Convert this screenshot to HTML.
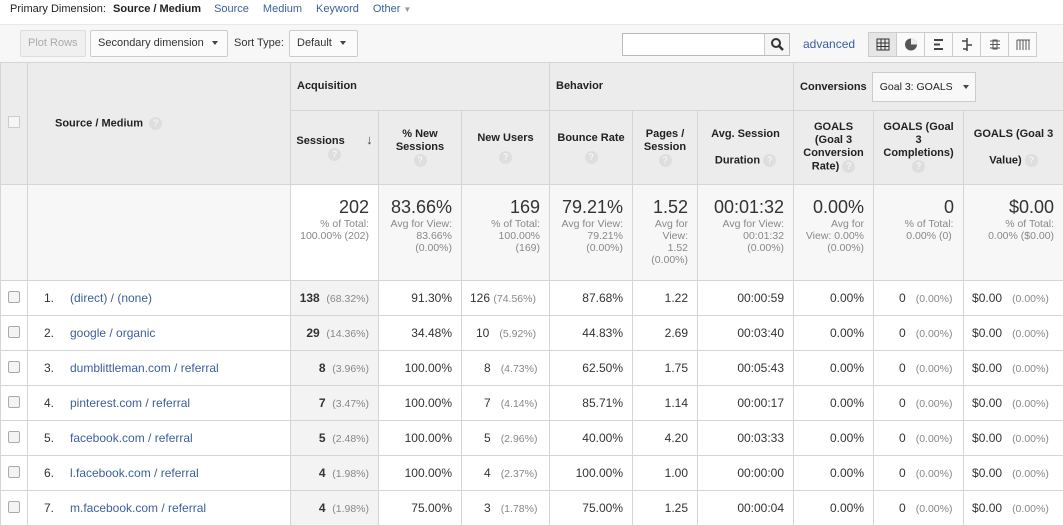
<!DOCTYPE html>
<html><head><style>
*{box-sizing:border-box;margin:0;padding:0}
body{width:1063px;height:525px;overflow:hidden;background:#fff;font-family:"Liberation Sans",Arial,sans-serif;color:#333;position:relative}
.top{position:absolute;left:0;top:0;width:1063px;height:25px;font-size:11px;padding:3px 0 0 10px;color:#222}
.top b{margin-left:4px;margin-right:13px}
.top a{color:#3b5f9b;margin-right:14px;text-decoration:none}
.tb{position:absolute;left:0;top:24px;width:1063px;height:38px;background:#f7f7f7;border-top:1px solid #e8e8e8}
.btn{position:absolute;top:5px;height:27px;border:1px solid #ccc;border-radius:2px;background:#fbfbfb;font-size:11px;padding:6px 7px;color:#333;white-space:nowrap}
.car{display:inline-block;border-left:3.5px solid transparent;border-right:3.5px solid transparent;border-top:4px solid #444;vertical-align:middle;margin-left:8px}
table{position:absolute;left:0;top:62px;border-collapse:collapse;table-layout:fixed;width:1063px;font-size:12px}
td,th{border:1px solid #d5d5d5;overflow:hidden}
th{background:#ececec;font-size:11px;font-weight:bold;color:#222;text-align:center;vertical-align:middle;line-height:13px}
.q{display:inline-block;width:13px;height:13px;border-radius:50%;background:#dedede;color:#fff;font-size:9px;line-height:13px;text-align:center;font-weight:normal;vertical-align:middle}
.sum td{background:#f7f7f7;text-align:right;vertical-align:top;padding:12px 9px 0 4px;color:#888;font-size:10.5px;line-height:12px}
.sum td big{display:block;font-size:18px;color:#333;line-height:20px;margin-bottom:1px}
.r td{height:35px;text-align:right;padding:0 9px 0 4px;color:#333}
.r td.s{background:#f3f3f3}
.g{color:#888;font-size:10.5px}
.cb{display:inline-block;width:12px;height:12px;border:1px solid #aaa;border-radius:2px;background:#f3f3f3}
.src{text-align:left!important;padding-left:16px!important}
.src span{display:inline-block;width:26px;color:#333}
.src a{color:#3b5f9b;text-decoration:none}
</style></head><body>
<div class="top">Primary Dimension: <b>Source / Medium</b><a>Source</a><a>Medium</a><a>Keyword</a><a style="color:#3b5f9b">Other <span style="font-size:8px;color:#999">▼</span></a></div>
<div class="tb">
<div class="btn" style="left:20px;color:#aaa;background:#f0f0f0;border-color:#ddd">Plot Rows</div>
<div class="btn" style="left:90px;width:138px">Secondary dimension<span class="car"></span></div>
<div style="position:absolute;left:234px;top:12px;font-size:11px">Sort Type:</div>
<div class="btn" style="left:289px;width:69px">Default<span class="car"></span></div>
<div style="position:absolute;left:622px;top:8px;width:168px;height:23px;border:1px solid #bbb;background:#fff"><div style="position:absolute;right:0;top:0;width:25px;height:21px;border-left:1px solid #ccc;background:#f5f5f5"><svg width="25" height="21"><circle cx="11" cy="9" r="4" stroke="#333" stroke-width="2" fill="none"/><path d="M14 12l4 4" stroke="#333" stroke-width="2.5"/></svg></div></div>
<div style="position:absolute;left:803px;top:12px;font-size:12px;color:#3b5f9b">advanced</div>
<div style="position:absolute;left:868px;top:7px;width:169px;height:25px;border:1px solid #ccc;background:#fafafa;display:flex">
<div style="width:28px;border-right:1px solid #ccc;background:#e6e6e6"><svg width="28" height="23"><rect x="8" y="6" width="12" height="11" fill="none" stroke="#333"/><path d="M12 6v11M16 6v11M8 10h12M8 13.5h12" stroke="#333"/></svg></div>
<div style="width:28px;border-right:1px solid #ccc"><svg width="28" height="23"><circle cx="14" cy="11.5" r="6" fill="#555"/><path d="M14 11.5V5.5A6 6 0 0 1 20 11.5z" fill="#eee"/></svg></div>
<div style="width:28px;border-right:1px solid #ccc"><svg width="28" height="23"><path d="M9 7h9M9 11.5h6M9 16h9" stroke="#444" stroke-width="2"/></svg></div>
<div style="width:28px;border-right:1px solid #ccc"><svg width="28" height="23"><path d="M14 5v13M9 8h5M14 12h5M10 16h4" stroke="#444" stroke-width="1.5"/></svg></div>
<div style="width:28px;border-right:1px solid #ccc"><svg width="28" height="23"><path d="M9 8h10M9 11.5h10M9 15h10" stroke="#555"/><rect x="12" y="7" width="4" height="9" fill="none" stroke="#555"/></svg></div>
<div style="width:28px"><svg width="28" height="23"><path d="M8 7v10M11 7v10M14 7v10M17 7v10M20 7v10M8 7h13" stroke="#555"/></svg></div>
</div>
</div>
<table>
<colgroup><col style="width:27px"><col style="width:263px"><col style="width:88px"><col style="width:83px"><col style="width:88px"><col style="width:83px"><col style="width:65px"><col style="width:96px"><col style="width:80px"><col style="width:90px"><col style="width:100px"></colgroup>
<tr style="height:48px"><th rowspan="2" style="vertical-align:middle"><span class="cb" style="background:#f5f5f5;border-color:#ccc;border-radius:0"></span></th><th rowspan="2" style="text-align:left;padding-left:27px">Source / Medium &nbsp;<span class="q">?</span></th>
<th colspan="3" style="text-align:left;padding-left:6px">Acquisition</th><th colspan="3" style="text-align:left;padding-left:6px">Behavior</th>
<th colspan="3" style="text-align:left;padding-left:6px;white-space:nowrap">Conversions <span style="display:inline-block;margin-left:2px;width:104px;height:30px;border:1px solid #ccc;background:#f8f8f8;font-weight:normal;font-size:10.5px;padding:8px 7px;text-align:left;vertical-align:middle;white-space:nowrap">Goal 3: GOALS<span class="car" style="margin-left:10px"></span></span></th></tr>
<tr style="height:74px">
<th>Sessions &nbsp;&nbsp;&nbsp;&nbsp;&nbsp;&nbsp;<span style="font-size:13px;color:#444">↓</span><br><span class="q">?</span></th>
<th>% New<br>Sessions<br><span class="q">?</span></th>
<th>New Users<br><span class="q" style="margin-top:6px">?</span></th>
<th>Bounce Rate<br><span class="q" style="margin-top:6px">?</span></th>
<th>Pages /<br>Session<br><span class="q">?</span></th>
<th>Avg. Session<br><br>Duration <span class="q">?</span></th>
<th>GOALS<br>(Goal 3<br>Conversion<br>Rate) <span class="q">?</span></th>
<th>GOALS (Goal<br>3<br>Completions)<br><span class="q">?</span></th>
<th>GOALS (Goal 3<br><br>Value) <span class="q">?</span></th></tr>
<tr class="sum" style="height:96px"><td></td><td></td>
<td style="background:#fff"><big>202</big>% of Total:<br>100.00% (202)</td>
<td><big>83.66%</big>Avg for View:<br>83.66%<br>(0.00%)</td>
<td><big>169</big>% of Total:<br>100.00%<br>(169)</td>
<td><big>79.21%</big>Avg for View:<br>79.21%<br>(0.00%)</td>
<td><big>1.52</big>Avg for<br>View:<br>1.52<br>(0.00%)</td>
<td><big>00:01:32</big>Avg for View:<br>00:01:32<br>(0.00%)</td>
<td><big>0.00%</big>Avg for<br>View: 0.00%<br>(0.00%)</td>
<td style="text-align:center;padding-left:30px"><big style="text-align:right">0</big>% of Total:<br>0.00% (0)</td>
<td><big>$0.00</big>% of Total:<br>0.00% ($0.00)</td></tr>
<tr class="r"><td style="text-align:center;padding:0"><span class="cb"></span></td><td class="src"><span>1.</span><a>(direct) / (none)</a></td><td class="s"><b>138</b> &nbsp;<span class="g">(68.32%)</span></td><td>91.30%</td><td style="text-align:left;padding-left:8px">126 <span class="g">(74.56%)</span></td><td>87.68%</td><td>1.22</td><td>00:00:59</td><td>0.00%</td><td style="text-align:left;padding-left:25px">0 &nbsp;&nbsp;<span class="g">(0.00%)</span></td><td style="text-align:left;padding-left:8px">$0.00 &nbsp;&nbsp;<span class="g">(0.00%)</span></td></tr>
<tr class="r"><td style="text-align:center;padding:0"><span class="cb"></span></td><td class="src"><span>2.</span><a>google / organic</a></td><td class="s"><b>29</b> &nbsp;<span class="g">(14.36%)</span></td><td>34.48%</td><td style="text-align:left;padding-left:14px">10 &nbsp;&nbsp;<span class="g">(5.92%)</span></td><td>44.83%</td><td>2.69</td><td>00:03:40</td><td>0.00%</td><td style="text-align:left;padding-left:25px">0 &nbsp;&nbsp;<span class="g">(0.00%)</span></td><td style="text-align:left;padding-left:8px">$0.00 &nbsp;&nbsp;<span class="g">(0.00%)</span></td></tr>
<tr class="r"><td style="text-align:center;padding:0"><span class="cb"></span></td><td class="src"><span>3.</span><a>dumblittleman.com / referral</a></td><td class="s"><b>8</b> &nbsp;<span class="g">(3.96%)</span></td><td>100.00%</td><td style="text-align:left;padding-left:22px">8 &nbsp;&nbsp;<span class="g">(4.73%)</span></td><td>62.50%</td><td>1.75</td><td>00:05:43</td><td>0.00%</td><td style="text-align:left;padding-left:25px">0 &nbsp;&nbsp;<span class="g">(0.00%)</span></td><td style="text-align:left;padding-left:8px">$0.00 &nbsp;&nbsp;<span class="g">(0.00%)</span></td></tr>
<tr class="r"><td style="text-align:center;padding:0"><span class="cb"></span></td><td class="src"><span>4.</span><a>pinterest.com / referral</a></td><td class="s"><b>7</b> &nbsp;<span class="g">(3.47%)</span></td><td>100.00%</td><td style="text-align:left;padding-left:22px">7 &nbsp;&nbsp;<span class="g">(4.14%)</span></td><td>85.71%</td><td>1.14</td><td>00:00:17</td><td>0.00%</td><td style="text-align:left;padding-left:25px">0 &nbsp;&nbsp;<span class="g">(0.00%)</span></td><td style="text-align:left;padding-left:8px">$0.00 &nbsp;&nbsp;<span class="g">(0.00%)</span></td></tr>
<tr class="r"><td style="text-align:center;padding:0"><span class="cb"></span></td><td class="src"><span>5.</span><a>facebook.com / referral</a></td><td class="s"><b>5</b> &nbsp;<span class="g">(2.48%)</span></td><td>100.00%</td><td style="text-align:left;padding-left:22px">5 &nbsp;&nbsp;<span class="g">(2.96%)</span></td><td>40.00%</td><td>4.20</td><td>00:03:33</td><td>0.00%</td><td style="text-align:left;padding-left:25px">0 &nbsp;&nbsp;<span class="g">(0.00%)</span></td><td style="text-align:left;padding-left:8px">$0.00 &nbsp;&nbsp;<span class="g">(0.00%)</span></td></tr>
<tr class="r"><td style="text-align:center;padding:0"><span class="cb"></span></td><td class="src"><span>6.</span><a>l.facebook.com / referral</a></td><td class="s"><b>4</b> &nbsp;<span class="g">(1.98%)</span></td><td>100.00%</td><td style="text-align:left;padding-left:22px">4 &nbsp;&nbsp;<span class="g">(2.37%)</span></td><td>100.00%</td><td>1.00</td><td>00:00:00</td><td>0.00%</td><td style="text-align:left;padding-left:25px">0 &nbsp;&nbsp;<span class="g">(0.00%)</span></td><td style="text-align:left;padding-left:8px">$0.00 &nbsp;&nbsp;<span class="g">(0.00%)</span></td></tr>
<tr class="r"><td style="text-align:center;padding:0"><span class="cb"></span></td><td class="src"><span>7.</span><a>m.facebook.com / referral</a></td><td class="s"><b>4</b> &nbsp;<span class="g">(1.98%)</span></td><td>75.00%</td><td style="text-align:left;padding-left:22px">3 &nbsp;&nbsp;<span class="g">(1.78%)</span></td><td>75.00%</td><td>1.25</td><td>00:00:04</td><td>0.00%</td><td style="text-align:left;padding-left:25px">0 &nbsp;&nbsp;<span class="g">(0.00%)</span></td><td style="text-align:left;padding-left:8px">$0.00 &nbsp;&nbsp;<span class="g">(0.00%)</span></td></tr>
</table>
</body></html>
